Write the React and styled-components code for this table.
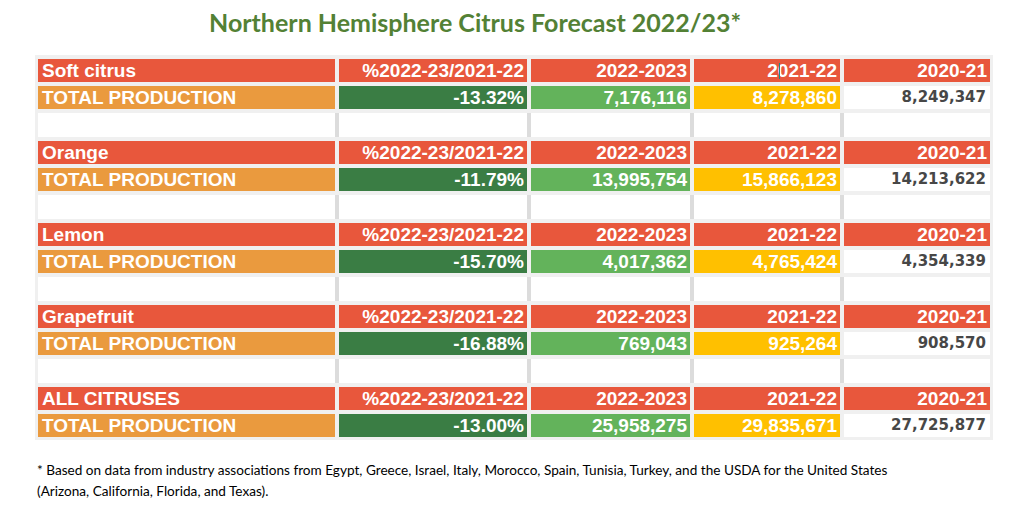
import React from 'react';
import styled, { createGlobalStyle } from 'styled-components';

const GlobalStyle = createGlobalStyle`
  body {
    margin: 0;
    background: #ffffff;
  }
`;

const Page = styled.div`
  width: 1017px;
  height: 512px;
  overflow: hidden;
  font-family: "Liberation Sans", Arial, sans-serif;
`;

const Title = styled.h1`
  margin: 0;
  height: 55px;
  box-sizing: border-box;
  padding: 8px 0 0 209px;
  font-family: Lato, "Open Sans", sans-serif;
  font-weight: 700;
  font-size: 25px;
  line-height: 28px;
  color: #538135;
  white-space: nowrap;
`;

const Table = styled.div`
  margin-left: 35px;
  width: 958px;
  box-sizing: border-box;
  padding: 4px 3px 3px;
  background: #f0f0f0;
  display: flex;
  flex-direction: column;
  gap: 4px;
`;

const Row = styled.div`
  display: grid;
  grid-template-columns: 297px 188px 159px 146px 146px;
  column-gap: 4px;
  height: ${(p) => (p.$blank ? 24 : 23)}px;
  background: ${(p) => (p.$blank ? '#dcdcdc' : '#f0f0f0')};
`;

const Cell = styled.div`
  position: relative;
  background: ${(p) => p.$bg || '#ffffff'};
  color: ${(p) => p.$color || '#ffffff'};
  font-weight: 700;
  font-size: 19px;
  line-height: 23px;
  padding: 0 3px 0 4px;
  text-align: ${(p) => (p.$left ? 'left' : 'right')};
  white-space: nowrap;
  overflow: hidden;
`;

const PlainValue = styled(Cell)`
  font-family: "DejaVu Sans", Verdana, sans-serif;
  font-size: 15px;
  color: #474747;
  padding-right: 4px;
`;

const Caret = styled.span`
  position: absolute;
  left: 85px;
  top: 4px;
  width: 1px;
  height: 16px;
  background: #1a8a8a;
`;

const Footnote = styled.p`
  margin: 20px 0 0;
  padding-left: 37px;
  font-family: Lato, "Open Sans", sans-serif;
  font-size: 13.6px;
  line-height: 21px;
  color: #000000;
`;

const RED = '#e8573c';
const ORANGE = '#ea9a3e';
const DARK_GREEN = '#3a7d44';
const LIGHT_GREEN = '#63b35b';
const YELLOW = '#ffc000';

const blocks = [
  { name: 'Soft citrus', pct: '-13.32%', y23: '7,176,116', y22: '8,278,860', y21: '8,249,347', caret: true },
  { name: 'Orange', pct: '-11.79%', y23: '13,995,754', y22: '15,866,123', y21: '14,213,622' },
  { name: 'Lemon', pct: '-15.70%', y23: '4,017,362', y22: '4,765,424', y21: '4,354,339' },
  { name: 'Grapefruit', pct: '-16.88%', y23: '769,043', y22: '925,264', y21: '908,570' },
  { name: 'ALL CITRUSES', pct: '-13.00%', y23: '25,958,275', y22: '29,835,671', y21: '27,725,877', last: true },
];

const Block = ({ item }) => (
  <>
    <Row>
      <Cell $bg={RED} $left>{item.name}</Cell>
      <Cell $bg={RED}>%2022-23/2021-22</Cell>
      <Cell $bg={RED}>2022-2023</Cell>
      <Cell $bg={RED}>
        2021-22
        {item.caret && <Caret />}
      </Cell>
      <Cell $bg={RED}>2020-21</Cell>
    </Row>
    <Row>
      <Cell $bg={ORANGE} $left>TOTAL PRODUCTION</Cell>
      <Cell $bg={DARK_GREEN}>{item.pct}</Cell>
      <Cell $bg={LIGHT_GREEN}>{item.y23}</Cell>
      <Cell $bg={YELLOW}>{item.y22}</Cell>
      <PlainValue>{item.y21}</PlainValue>
    </Row>
    {!item.last && (
      <Row $blank>
        <Cell />
        <Cell />
        <Cell />
        <Cell />
        <Cell />
      </Row>
    )}
  </>
);

export default function App() {
  return (
    <Page>
      <GlobalStyle />
      <Title>Northern Hemisphere Citrus Forecast 2022/23*</Title>
      <Table>
        {blocks.map((b) => (
          <Block key={b.name} item={b} />
        ))}
      </Table>
      <Footnote>
        * Based on data from industry associations from Egypt, Greece, Israel, Italy, Morocco, Spain, Tunisia, Turkey, and the USDA for the United States
        <br />
        (Arizona, California, Florida, and Texas).
      </Footnote>
    </Page>
  );
}
